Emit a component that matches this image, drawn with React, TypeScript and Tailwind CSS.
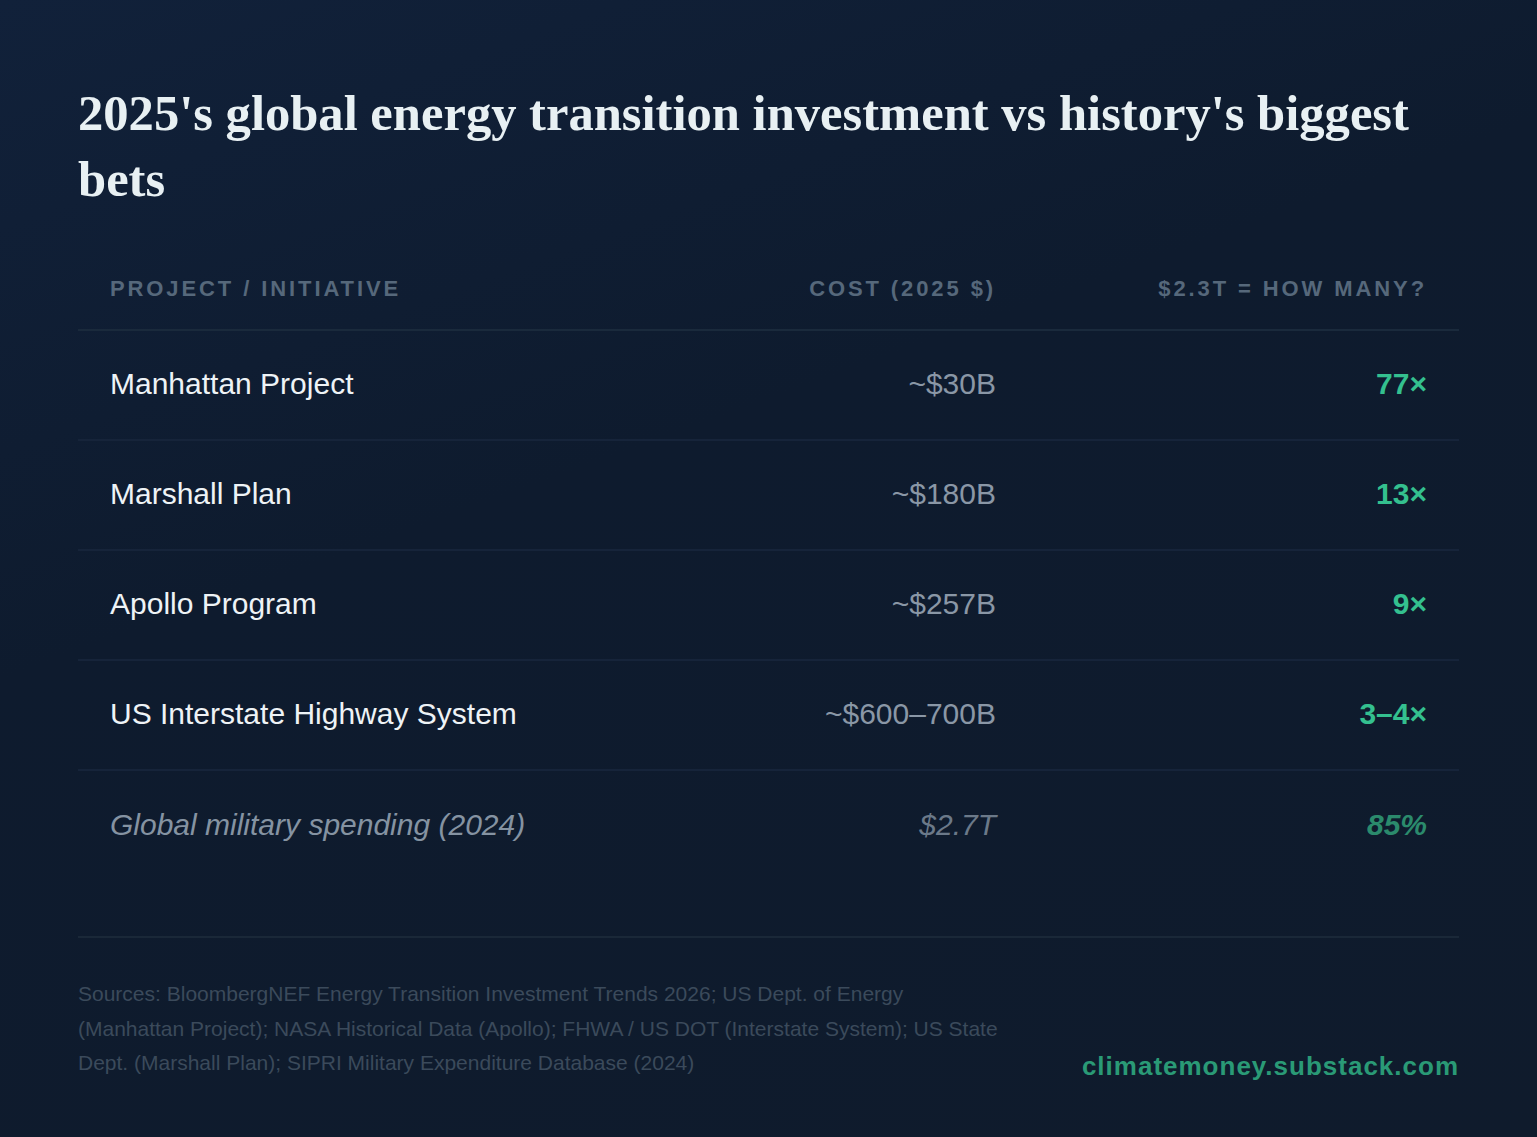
const rows = [
  { name: "Manhattan Project", cost: "~$30B", mult: "77×" },
  { name: "Marshall Plan", cost: "~$180B", mult: "13×" },
  { name: "Apollo Program", cost: "~$257B", mult: "9×" },
  { name: "US Interstate Highway System", cost: "~$600–700B", mult: "3–4×" },
]

export default function App() {
  return (
    <div
      className="min-h-[1137px] w-full bg-[linear-gradient(160deg,#11213a_0%,#0e1b2e_40%,#0f1b2c_100%)] px-[78px] pt-[80px] pb-[60px]"
      style={{ fontFamily: '"Liberation Sans", Arial, sans-serif' }}
    >
      <h1 className="font-['Liberation_Serif',serif] text-[50.6px] font-bold leading-[66px] text-[#e8f0f3]">
        2025's global energy transition investment vs history's biggest bets
      </h1>

      <div className="mt-[35px]">
        <div className="grid grid-cols-[1fr_300px_431px] border-b-2 border-[#1a2a3c] h-[84px] items-center px-[32px] text-[22px] font-bold uppercase tracking-[2.9px] text-[#56687b]">
          <div>Project / Initiative</div>
          <div className="text-right">Cost (2025 $)</div>
          <div className="text-right">$2.3T = How many?</div>
        </div>

        {rows.map((r) => (
          <div
            key={r.name}
            className="grid grid-cols-[1fr_300px_431px] h-[110px] items-center border-b-2 border-[#16243a] px-[32px] pb-[3px] text-[30px]"
          >
            <div className="text-[#eef3f6]">{r.name}</div>
            <div className="text-right text-[#8a97a6]">{r.cost}</div>
            <div className="text-right font-bold text-[#34c08f]">{r.mult}</div>
          </div>
        ))}

        <div className="grid grid-cols-[1fr_300px_431px] h-[110px] items-center px-[32px] pb-[3px] text-[30px] italic">
          <div className="text-[#8593a2]">Global military spending (2024)</div>
          <div className="text-right text-[#6b7989]">$2.7T</div>
          <div className="text-right font-bold text-[#2b8a6c]">85%</div>
        </div>
      </div>

      <div className="mt-[55px] border-t-2 border-[#1a2838] pt-[39px] flex items-end justify-between">
        <p className="text-[21px] leading-[34.5px] text-[#3b4a5b]">
          Sources: BloombergNEF Energy Transition Investment Trends 2026; US Dept. of Energy
          <br />
          (Manhattan Project); NASA Historical Data (Apollo); FHWA / US DOT (Interstate System); US State
          <br />
          Dept. (Marshall Plan); SIPRI Military Expenditure Database (2024)
        </p>
        <div className="text-[26px] font-bold tracking-[1px] text-[#2a9a76] leading-[34px] mb-[-2px]">
          climatemoney.substack.com
        </div>
      </div>
    </div>
  )
}
